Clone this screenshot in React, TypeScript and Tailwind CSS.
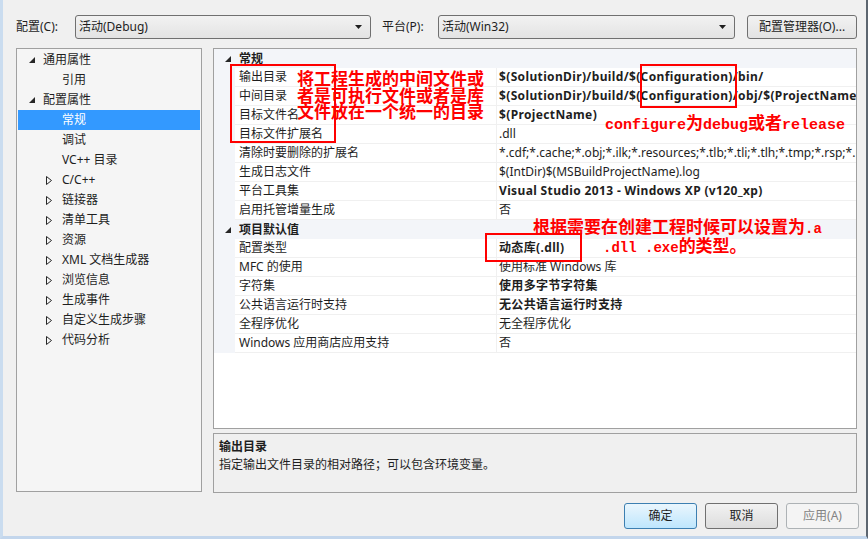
import React from 'react';

const UI_FONT = "font-['Noto_Sans','Noto_Sans_CJK_SC',sans-serif]";

type TreeItem = { label: string; level: 0 | 1; state?: 'open' | 'closed'; selected?: boolean };

const TREE: TreeItem[] = [
  { label: '通用属性', level: 0, state: 'open' },
  { label: '引用', level: 1 },
  { label: '配置属性', level: 0, state: 'open' },
  { label: '常规', level: 1, selected: true },
  { label: '调试', level: 1 },
  { label: 'VC++ 目录', level: 1 },
  { label: 'C/C++', level: 1, state: 'closed' },
  { label: '链接器', level: 1, state: 'closed' },
  { label: '清单工具', level: 1, state: 'closed' },
  { label: '资源', level: 1, state: 'closed' },
  { label: 'XML 文档生成器', level: 1, state: 'closed' },
  { label: '浏览信息', level: 1, state: 'closed' },
  { label: '生成事件', level: 1, state: 'closed' },
  { label: '自定义生成步骤', level: 1, state: 'closed' },
  { label: '代码分析', level: 1, state: 'closed' },
];

type Row = { name: string; value?: string; bold?: boolean; category?: boolean };

const ROWS: Row[] = [
  { name: '常规', category: true },
  { name: '输出目录', value: '$(SolutionDir)/build/$(Configuration)/bin/', bold: true },
  { name: '中间目录', value: '$(SolutionDir)/build/$(Configuration)/obj/$(ProjectName)/', bold: true },
  { name: '目标文件名', value: '$(ProjectName)', bold: true },
  { name: '目标文件扩展名', value: '.dll' },
  { name: '清除时要删除的扩展名', value: '*.cdf;*.cache;*.obj;*.ilk;*.resources;*.tlb;*.tli;*.tlh;*.tmp;*.rsp;*.pgc;*.pgd' },
  { name: '生成日志文件', value: '$(IntDir)$(MSBuildProjectName).log' },
  { name: '平台工具集', value: 'Visual Studio 2013 - Windows XP (v120_xp)', bold: true },
  { name: '启用托管增量生成', value: '否' },
  { name: '项目默认值', category: true },
  { name: '配置类型', value: '动态库(.dll)', bold: true },
  { name: 'MFC 的使用', value: '使用标准 Windows 库' },
  { name: '字符集', value: '使用多字节字符集', bold: true },
  { name: '公共语言运行时支持', value: '无公共语言运行时支持', bold: true },
  { name: '全程序优化', value: '无全程序优化' },
  { name: 'Windows 应用商店应用支持', value: '否' },
];

const OpenArrow = () => (
  <svg width="6" height="6" viewBox="0 0 6 6" className="shrink-0">
    <path d="M6 0 L6 6 L0 6 Z" fill="#262626" />
  </svg>
);

const ClosedArrow = () => (
  <svg width="6" height="9" viewBox="0 0 6 9" className="shrink-0">
    <path d="M0.5 0.5 L5.5 4.5 L0.5 8.5 Z" fill="none" stroke="#262626" strokeWidth="1" />
  </svg>
);

const Combo: React.FC<{ text: string; width: string }> = ({ text, width }) => (
  <div
    className={`${width} h-[24px] flex items-center justify-between pl-[3px] pr-[8px] rounded-[3px] border border-[#707070] bg-gradient-to-b from-[#f2f2f2] to-[#e3e3e3] text-[12px] text-[#1e1e1e]`}
  >
    <span>{text}</span>
    <svg width="7" height="4" viewBox="0 0 7 4">
      <path d="M0 0 L7 0 L3.5 4 Z" fill="#1e1e1e" />
    </svg>
  </div>
);

const Btn: React.FC<{ text: string; kind?: 'default' | 'disabled' | 'normal'; width: string }> = ({
  text,
  kind = 'normal',
  width,
}) => {
  const cls =
    kind === 'default'
      ? 'border-[#3c7fb1] bg-gradient-to-b from-[#eaf6fd] to-[#bee6fd] text-[#1e1e1e]'
      : kind === 'disabled'
        ? 'border-[#adb2b5] bg-[#f4f4f4] text-[#838383]'
        : 'border-[#707070] bg-gradient-to-b from-[#f2f2f2] to-[#dddddd] text-[#1e1e1e]';
  return (
    <div className={`${width} h-[26px] flex items-center justify-center rounded-[3px] border text-[12px] ${cls}`}>
      {text}
    </div>
  );
};

// red note text: CJK at full size, latin half-width like SimSun
const Ascii: React.FC<{ children: React.ReactNode; size?: string }> = ({ children, size = 'text-[14px]' }) => (
  <span className={`font-['Liberation_Mono',monospace] ${size}`}>{children}</span>
);

export default function App() {
  return (
    <div
      className={`relative w-[868px] h-[539px] overflow-hidden bg-[#f0f0f0] border-l-[3px] border-l-[#cadcef] border-b-[3px] border-b-[#c3d6ec] border-r-2 border-r-[#5d6670] ${UI_FONT} text-[12px] text-[#1e1e1e]`}
    >
      {/* top selectors */}
      <div className="flex items-center pt-[15px] pl-[13px] h-[39px]">
        <span className="w-[59px]">配置(C):</span>
        <Combo text="活动(Debug)" width="w-[296px]" />
        <span className="ml-[11px] w-[56px]">平台(P):</span>
        <Combo text="活动(Win32)" width="w-[297px]" />
        <div className="ml-[12px] w-[110px] h-[24px] flex items-center justify-center rounded-[3px] border border-[#707070] bg-gradient-to-b from-[#f2f2f2] to-[#e3e3e3]">
          配置管理器(O)...
        </div>
      </div>

      <div className="flex mt-[9px] pl-[13px] gap-[11px]">
        {/* tree */}
        <div className="w-[186px] h-[444px] bg-[#f5f5f5] border border-[#a0a0a0] pt-px px-px">
          {TREE.map((t) => (
            <div
              key={t.label}
              className={`h-[20px] flex items-center ${t.selected ? 'bg-[#3399ff] text-white' : ''}`}
            >
              {t.level === 0 ? (
                <>
                  <span className="w-[25px] flex justify-end pr-[8px]">
                    <OpenArrow />
                  </span>
                  <span>{t.label}</span>
                </>
              ) : (
                <>
                  <span className="w-[44px] flex justify-end pr-[10px]">
                    {t.state === 'closed' && <ClosedArrow />}
                  </span>
                  <span>{t.label}</span>
                </>
              )}
            </div>
          ))}
        </div>

        {/* property grid + description */}
        <div className="w-[644px] flex flex-col gap-[4px]">
          <div className="h-[381px] border border-[#a0a0a0] bg-white overflow-hidden">
            {ROWS.map((r) =>
              r.category ? (
                <div key={r.name} className="h-[19px] flex items-center bg-[#f3f5f9]">
                  <span className="w-[25px] flex justify-end pr-[8px]">
                    <OpenArrow />
                  </span>
                  <span className="font-bold">{r.name}</span>
                </div>
              ) : (
                <div key={r.name} className="h-[19px] flex bg-[#f0f0f0]">
                  <div className="w-[21px] shrink-0 bg-[#f3f5f9]" />
                  <div className="w-[261px] shrink-0 bg-white border-b border-[#f0f0f0] flex items-center pl-[4px]">
                    {r.name}
                  </div>
                  <div className="w-px bg-[#f0f0f0]" />
                  <div
                    className={`flex-1 min-w-0 bg-white border-b border-[#f0f0f0] flex items-center pl-[2px] whitespace-nowrap overflow-hidden ${r.bold ? 'font-bold tracking-[0.36px]' : ''}`}
                  >
                    {r.value}
                  </div>
                </div>
              ),
            )}
          </div>
          <div className="h-[60px] border border-[#a0a0a0] bg-[#f0f0f0] px-[5px] pt-[4px]">
            <div className="font-bold leading-[18px]">输出目录</div>
            <div className="leading-[18px]">指定输出文件目录的相对路径；可以包含环境变量。</div>
          </div>
        </div>
      </div>

      {/* dialog buttons */}
      <div className="flex justify-end gap-[8px] pr-[7px] mt-[10px]">
        <Btn text="确定" kind="default" width="w-[73px]" />
        <Btn text="取消" width="w-[73px]" />
        <Btn text="应用(A)" kind="disabled" width="w-[73px]" />
      </div>

      {/* red annotations */}
      <div className="absolute left-[227px] top-[64px] w-[106px] h-[79px] border-2 border-[#ff0000]" />
      <div className="absolute left-[637px] top-[64px] w-[97px] h-[44px] border-2 border-[#ff0000]" />
      <div className="absolute left-[482px] top-[233px] w-[97px] h-[29px] border-2 border-[#ff0000]" />

      <div className="absolute left-[294px] top-[70px] text-[17px] leading-[16.5px] text-[#ff0000] font-['Noto_Sans_CJK_SC',sans-serif] font-semibold whitespace-nowrap">
        <div>将工程生成的中间文件或</div>
        <div>者是可执行文件或者是库</div>
        <div>文件放在一个统一的目录</div>
      </div>
      <div className="absolute left-[602px] top-[112px] text-[17px] leading-[20px] text-[#ff0000] font-['Noto_Sans_CJK_SC',sans-serif] font-semibold whitespace-pre">
        <Ascii size="text-[15px]">configure</Ascii>为<Ascii size="text-[15px]">debug</Ascii>或者
        <Ascii size="text-[15px]">release</Ascii>
      </div>
      <div className="absolute left-[530px] top-[218px] text-[17px] leading-[16px] text-[#ff0000] font-['Noto_Sans_CJK_SC',sans-serif] font-semibold whitespace-pre">
        <div>
          根据需要在创建工程时候可以设置为<Ascii>.a</Ascii>
        </div>
        <div className="pl-[70px]">
          <Ascii>.dll .exe</Ascii>的类型。
        </div>
      </div>
    </div>
  );
}
